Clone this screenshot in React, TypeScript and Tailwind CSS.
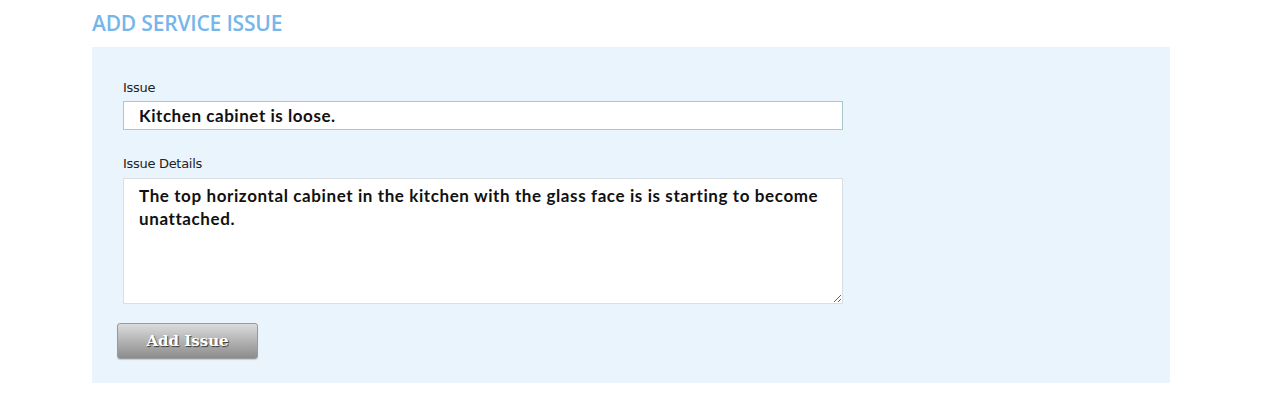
export default function App() {
  return (
    <div className="min-h-[400px] bg-white pl-[92px] pr-[110px] pt-[10px] font-['Liberation_Sans',sans-serif]">
      {/* Title */}
      <h1 className="text-[21px] leading-[26px] font-semibold text-[#76b6ea] font-['Open_Sans',sans-serif] tracking-[-0.2px]">
        ADD SERVICE ISSUE
      </h1>

      {/* Panel */}
      <div className="mt-[11px] bg-[#eaf4fd] pl-[31px] pt-[33px] pb-[24px]">
        <div className="w-[720px]">
          <label className="block text-[13px] leading-[16px] text-[#222] font-['DejaVu_Sans',sans-serif] tracking-[-0.3px]">
            Issue
          </label>
          <input
            type="text"
            defaultValue="Kitchen cabinet is loose."
            className="mt-[5px] block w-full h-[29px] border border-[#a9c7cf] bg-white px-[15px] text-[17px] font-bold text-[#111] font-['Lato',sans-serif] tracking-[0.55px] outline-none"
          />

          <label className="mt-[26px] block text-[13px] leading-[16px] text-[#222] font-['DejaVu_Sans',sans-serif] tracking-[-0.3px]">
            Issue Details
          </label>
          <textarea
            defaultValue="The top horizontal cabinet in the kitchen with the glass face is is starting to become unattached."
            className="mt-[6px] block w-full h-[126px] border border-[#d9dfe3] bg-white px-[15px] pt-[5px] text-[17px] leading-[23px] font-bold text-[#111] font-['Lato',sans-serif] tracking-[0.6px] outline-none"
          />
        </div>

        <button className="mt-[19px] -ml-[6px] w-[141px] h-[36px] rounded-[3px] border border-[#9a9a9a] bg-gradient-to-b from-[#dcdcdc] to-[#8c8c8c] text-[15px] font-bold text-white font-['DejaVu_Serif',serif] [text-shadow:1px_1px_1px_#333] shadow-[0_1px_1px_rgba(0,0,0,0.15)]">
          Add Issue
        </button>
      </div>
    </div>
  );
}
